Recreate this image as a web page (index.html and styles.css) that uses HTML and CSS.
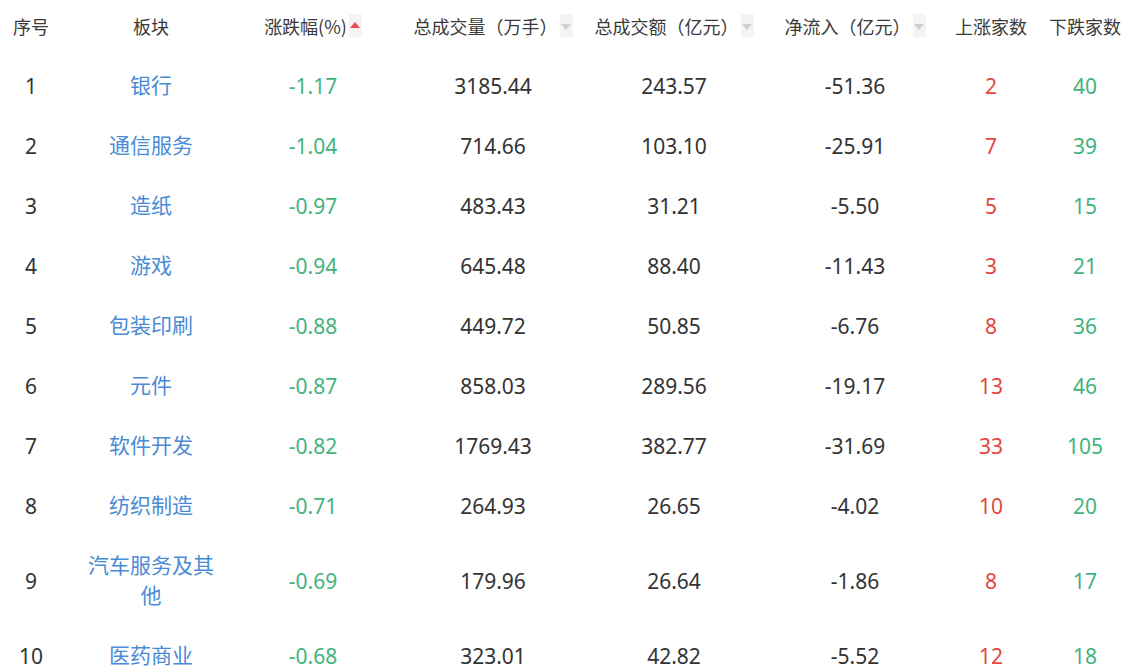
FILE: index.html
```html
<!DOCTYPE html>
<html lang="zh-CN">
<head>
<meta charset="utf-8">
<title>板块涨跌</title>
<link rel="stylesheet" href="styles.css">
</head>
<body>
<div class="table">
  <div class="row head">
    <div class="cell c1">序号</div>
    <div class="cell">板块</div>
    <div class="cell">涨跌幅(%)<span class="sort active"><i class="up"></i></span></div>
    <div class="cell">总成交量（万手）<span class="sort"><i class="down"></i></span></div>
    <div class="cell">总成交额（亿元）<span class="sort"><i class="down"></i></span></div>
    <div class="cell">净流入（亿元）<span class="sort"><i class="down"></i></span></div>
    <div class="cell">上涨家数</div>
    <div class="cell">下跌家数</div>
  </div>

  <div class="row"><div class="cell c1">1</div><div class="cell name">银行</div><div class="cell green">-1.17</div><div class="cell">3185.44</div><div class="cell">243.57</div><div class="cell">-51.36</div><div class="cell red">2</div><div class="cell green">40</div></div>
  <div class="row"><div class="cell c1">2</div><div class="cell name">通信服务</div><div class="cell green">-1.04</div><div class="cell">714.66</div><div class="cell">103.10</div><div class="cell">-25.91</div><div class="cell red">7</div><div class="cell green">39</div></div>
  <div class="row"><div class="cell c1">3</div><div class="cell name">造纸</div><div class="cell green">-0.97</div><div class="cell">483.43</div><div class="cell">31.21</div><div class="cell">-5.50</div><div class="cell red">5</div><div class="cell green">15</div></div>
  <div class="row"><div class="cell c1">4</div><div class="cell name">游戏</div><div class="cell green">-0.94</div><div class="cell">645.48</div><div class="cell">88.40</div><div class="cell">-11.43</div><div class="cell red">3</div><div class="cell green">21</div></div>
  <div class="row"><div class="cell c1">5</div><div class="cell name">包装印刷</div><div class="cell green">-0.88</div><div class="cell">449.72</div><div class="cell">50.85</div><div class="cell">-6.76</div><div class="cell red">8</div><div class="cell green">36</div></div>
  <div class="row"><div class="cell c1">6</div><div class="cell name">元件</div><div class="cell green">-0.87</div><div class="cell">858.03</div><div class="cell">289.56</div><div class="cell">-19.17</div><div class="cell red">13</div><div class="cell green">46</div></div>
  <div class="row"><div class="cell c1">7</div><div class="cell name">软件开发</div><div class="cell green">-0.82</div><div class="cell">1769.43</div><div class="cell">382.77</div><div class="cell">-31.69</div><div class="cell red">33</div><div class="cell green">105</div></div>
  <div class="row"><div class="cell c1">8</div><div class="cell name">纺织制造</div><div class="cell green">-0.71</div><div class="cell">264.93</div><div class="cell">26.65</div><div class="cell">-4.02</div><div class="cell red">10</div><div class="cell green">20</div></div>
  <div class="row"><div class="cell c1">9</div><div class="cell name">汽车服务及其他</div><div class="cell green">-0.69</div><div class="cell">179.96</div><div class="cell">26.64</div><div class="cell">-1.86</div><div class="cell red">8</div><div class="cell green">17</div></div>
  <div class="row"><div class="cell c1">10</div><div class="cell name">医药商业</div><div class="cell green">-0.68</div><div class="cell">323.01</div><div class="cell">42.82</div><div class="cell">-5.52</div><div class="cell red">12</div><div class="cell green">18</div></div>
</div>
</body>
</html>
```

FILE: styles.css
```css
html, body {
  margin: 0;
  padding: 0;
  background: #ffffff;
}
body {
  font-family: "Noto Sans", "Noto Sans CJK SC", sans-serif;
  color: #333333;
  overflow: hidden;
}
.table {
  width: 1140px;
}
.row {
  display: grid;
  grid-template-columns: 72px 158px 166px 194px 168px 194px 78px 110px;
  align-items: center;
}
.cell {
  text-align: center;
  font-size: 21px;
  line-height: 30px;
  padding: 15px 0;
  white-space: nowrap;
}
.c1 {
  padding-right: 10px;
}
.head {
  height: 56px;
}
.head .cell {
  font-size: 18px;
  line-height: 24px;
  padding: 0 0 5px 0;
  display: flex;
  justify-content: center;
  align-items: center;
  color: #3a3a3a;
  font-family: "Noto Sans CJK SC", sans-serif;
}
.head .c1 {
  padding-right: 10px;
}
.name {
  color: #4a8bd6;
  white-space: normal;
  padding: 13px 10px 17px 10px;
  font-family: "Noto Sans CJK SC", sans-serif;
}
.green {
  color: #43b37c;
}
.red {
  color: #e3473b;
}
.sort {
  display: inline-flex;
  width: 13px;
  height: 23px;
  margin-left: 2px;
  background: #f4f4f4;
  justify-content: center;
  align-items: center;
}
.sort i {
  display: block;
  width: 0;
  height: 0;
  border-left: 5px solid transparent;
  border-right: 5px solid transparent;
}
.sort i.up {
  border-bottom: 6px solid #e14e4e;
  margin-top: -1px;
}
.sort i.down {
  border-top: 6px solid #cfcfcf;
  margin-top: 3px;
}
```
